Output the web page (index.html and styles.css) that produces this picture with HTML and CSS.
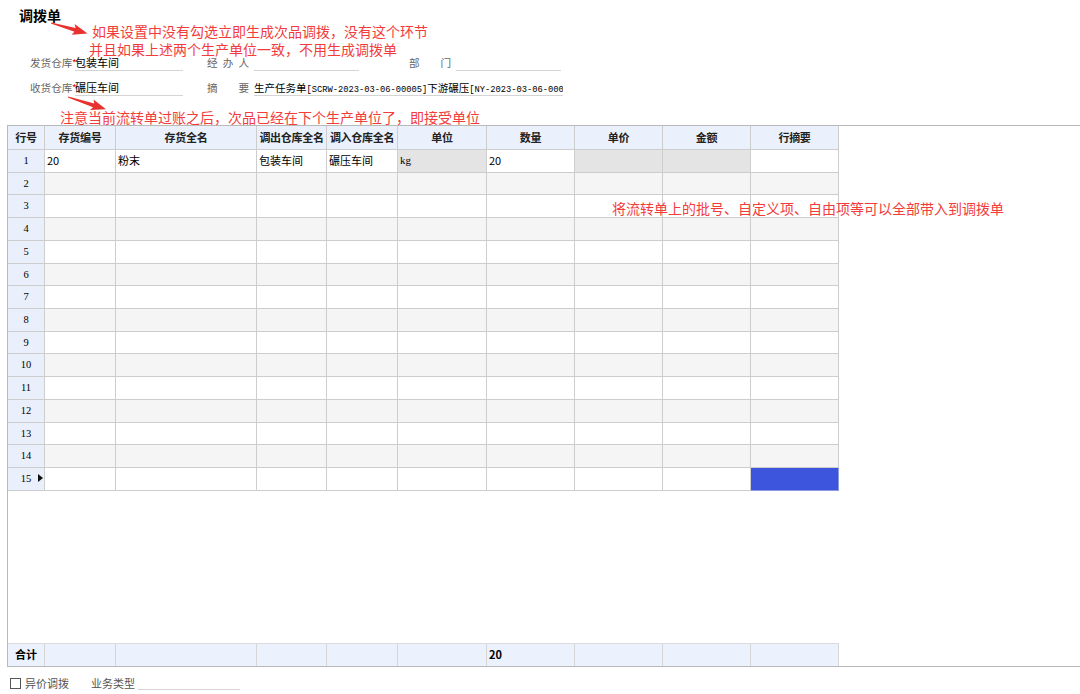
FILE: index.html
```html
<!DOCTYPE html>
<html lang="zh">
<head>
<meta charset="utf-8">
<title>调拨单</title>
<link rel="stylesheet" href="styles.css">
</head>
<body>
<div class="page">
  <div class="title">调拨单</div>

  <div class="form">
    <div class="frow">
      <span class="lab">发货仓库</span><span class="req">*</span><span class="field f1">包装车间</span>
      <span class="lab jl">经办人</span><span class="field f2"></span>
      <span class="lab jl l3">部门</span><span class="field f2"></span>
    </div>
    <div class="frow r2">
      <span class="lab">收货仓库</span><span class="req">*</span><span class="field f1">碾压车间</span>
      <span class="lab jl">摘要</span><span class="field f3">生产任务单<span class="mono">[SCRW-2023-03-06-00005]</span>下游碾压<span class="mono">[NY-2023-03-06-000</span></span>
    </div>
  </div>

  <div class="grid">
    <div class="sheet">
      <div class="c h">行号</div><div class="c h">存货编号</div><div class="c h">存货全名</div><div class="c h">调出仓库全名</div><div class="c h">调入仓库全名</div><div class="c h">单位</div><div class="c h">数量</div><div class="c h">单价</div><div class="c h">金额</div><div class="c h">行摘要</div>

      <div class="c n">1</div><div class="c">20</div><div class="c">粉末</div><div class="c">包装车间</div><div class="c">碾压车间</div><div class="c g ser">kg</div><div class="c">20</div><div class="c g"></div><div class="c g"></div><div class="c"></div>

      <div class="c n">2</div><div class="c e"></div><div class="c e"></div><div class="c e"></div><div class="c e"></div><div class="c e"></div><div class="c e"></div><div class="c e"></div><div class="c e"></div><div class="c e"></div>
      <div class="c n">3</div><div class="c"></div><div class="c"></div><div class="c"></div><div class="c"></div><div class="c"></div><div class="c"></div><div class="c"></div><div class="c"></div><div class="c"></div>
      <div class="c n">4</div><div class="c e"></div><div class="c e"></div><div class="c e"></div><div class="c e"></div><div class="c e"></div><div class="c e"></div><div class="c e"></div><div class="c e"></div><div class="c e"></div>
      <div class="c n">5</div><div class="c"></div><div class="c"></div><div class="c"></div><div class="c"></div><div class="c"></div><div class="c"></div><div class="c"></div><div class="c"></div><div class="c"></div>
      <div class="c n">6</div><div class="c e"></div><div class="c e"></div><div class="c e"></div><div class="c e"></div><div class="c e"></div><div class="c e"></div><div class="c e"></div><div class="c e"></div><div class="c e"></div>
      <div class="c n">7</div><div class="c"></div><div class="c"></div><div class="c"></div><div class="c"></div><div class="c"></div><div class="c"></div><div class="c"></div><div class="c"></div><div class="c"></div>
      <div class="c n">8</div><div class="c e"></div><div class="c e"></div><div class="c e"></div><div class="c e"></div><div class="c e"></div><div class="c e"></div><div class="c e"></div><div class="c e"></div><div class="c e"></div>
      <div class="c n">9</div><div class="c"></div><div class="c"></div><div class="c"></div><div class="c"></div><div class="c"></div><div class="c"></div><div class="c"></div><div class="c"></div><div class="c"></div>
      <div class="c n">10</div><div class="c e"></div><div class="c e"></div><div class="c e"></div><div class="c e"></div><div class="c e"></div><div class="c e"></div><div class="c e"></div><div class="c e"></div><div class="c e"></div>
      <div class="c n">11</div><div class="c"></div><div class="c"></div><div class="c"></div><div class="c"></div><div class="c"></div><div class="c"></div><div class="c"></div><div class="c"></div><div class="c"></div>
      <div class="c n">12</div><div class="c e"></div><div class="c e"></div><div class="c e"></div><div class="c e"></div><div class="c e"></div><div class="c e"></div><div class="c e"></div><div class="c e"></div><div class="c e"></div>
      <div class="c n">13</div><div class="c"></div><div class="c"></div><div class="c"></div><div class="c"></div><div class="c"></div><div class="c"></div><div class="c"></div><div class="c"></div><div class="c"></div>
      <div class="c n">14</div><div class="c e"></div><div class="c e"></div><div class="c e"></div><div class="c e"></div><div class="c e"></div><div class="c e"></div><div class="c e"></div><div class="c e"></div><div class="c e"></div>
      <div class="c n cur">15<span class="tri"></span></div><div class="c"></div><div class="c"></div><div class="c"></div><div class="c"></div><div class="c"></div><div class="c"></div><div class="c"></div><div class="c"></div><div class="c sel"></div>
    </div>
    <div class="spacer"></div>
    <div class="sheet foot">
      <div class="c f b">合计</div><div class="c f"></div><div class="c f"></div><div class="c f"></div><div class="c f"></div><div class="c f"></div><div class="c f b">20</div><div class="c f"></div><div class="c f"></div><div class="c f"></div>
    </div>
  </div>

  <div class="bottom">
    <span class="chk"></span><span class="btxt">异价调拨</span>
    <span class="btxt bt2">业务类型</span><span class="field f4"></span>
  </div>

  <div class="note n1">如果设置中没有勾选立即生成次品调拨，没有这个环节</div>
  <div class="note n2">并且如果上述两个生产单位一致，不用生成调拨单</div>
  <div class="note n3">注意当前流转单过账之后，次品已经在下个生产单位了，即接受单位</div>
  <div class="note n4">将流转单上的批号、自定义项、自由项等可以全部带入到调拨单</div>

  <svg class="arrow a1" width="40" height="14" viewBox="0 -7 40 14"><polygon points="0,-0.6 25,-2 23,-5.5 38,0 23,5.5 25,2 0,0.6" fill="#e8322f"/></svg>
  <svg class="arrow a2" width="42" height="14" viewBox="0 -7 42 14"><polygon points="0,-0.6 27,-2 25,-5.5 40,0 25,5.5 27,2 0,0.6" fill="#e8322f"/></svg>
</div>
</body>
</html>
```

FILE: styles.css
```css
* { box-sizing: border-box; }
html, body { margin: 0; padding: 0; background: #fff; }
body {
  font-family: "Noto Sans CJK SC", "Noto Sans", sans-serif;
  color: #000;
  width: 1080px;
  height: 694px;
  overflow: hidden;
}
.page { position: relative; width: 1080px; height: 694px; }

.title {
  height: 30px;
  padding-left: 19px;
  padding-top: 6px;
  font-size: 14px;
  line-height: 18px;
  font-weight: bold;
}

.form { margin-top: 21px; font-size: 11px; }
.frow {
  display: flex;
  align-items: flex-end;
  height: 24px;
  padding-left: 30px;
  padding-bottom: 4px;
}
.frow.r2 { height: 25px; padding-bottom: 4px; }
.lab {
  display: inline-block;
  width: 42px;
  color: #666;
  line-height: 14px;
  white-space: nowrap;
  font-size: 10.6px;
  padding-bottom: 1px;
}
.lab.jl { text-align: justify; text-align-last: justify; margin-left: 24px; margin-right: 5px; }
.lab.l3 { margin-left: 50px; }
.req { display: inline-block; width: 3px; color: #e00; font-size: 10px; line-height: 14px; padding-bottom: 1px; }
.field {
  display: inline-block;
  height: 16px;
  line-height: 15px;
  border-bottom: 1px solid #d4d4d4;
  white-space: nowrap;
  overflow: hidden;
  font-size: 11px;
  color: #000;
}
.f1 { width: 108px; }
.f2 { width: 105px; }
.f3 { width: 309px; font-size: 10.5px; }
.mono { font-family: "Liberation Mono", monospace; font-size: 8.75px; }

.grid {
  margin-top: 25px;
  margin-left: 7px;
  width: 1080px;
  height: 542px;
  border-top: 1px solid #b9b9b9;
  border-bottom: 1px solid #b9b9b9;
  border-left: 1px solid #b9b9b9;
  display: flex;
  flex-direction: column;
}
.sheet {
  display: grid;
  grid-template-columns: 37px 71px 141px 70px 71px 89px 88px 88px 88px 88px;
  grid-template-rows: 24px repeat(15, 22.73px);
  width: 831px;
}
.spacer { flex: 1; }
.sheet.foot { grid-template-rows: 23px; }

.c {
  border-right: 1px solid #cdcdcd;
  border-bottom: 1px solid #cdcdcd;
  font-size: 11px;
  line-height: 21px;
  padding-left: 2px;
  white-space: nowrap;
  overflow: hidden;
  background: #fff;
}
.c.h {
  background: #eaf1fc;
  font-weight: bold;
  text-align: center;
  padding-left: 0;
  line-height: 22px;
  color: #222;
  letter-spacing: -0.3px;
}
.c.n {
  background: #e9f0fb;
  text-align: center;
  padding-left: 0;
  font-family: "Liberation Serif", serif;
  font-size: 10.5px;
  position: relative;
}
.c.e { background: #f5f5f5; }
.c.g { background: #e4e4e4; }
.ser { font-family: "Liberation Serif", serif; }
.c.sel { background: #3c55dc; border: 1px solid #8e9ae0; border-left: none; border-top: none; }
.tri {
  position: absolute;
  right: 1px;
  top: 6px;
  width: 0; height: 0;
  border-top: 4.5px solid transparent;
  border-bottom: 4.5px solid transparent;
  border-left: 5px solid #111;
}
.c.f {
  background: #ecf2fd;
  border-top: 1px solid #dadada;
  border-right: 1px solid #d6d6d6;
  border-bottom: none;
  line-height: 21px;
}
.c.b { font-weight: bold; }
.foot .c:first-child { text-align: center; padding-left: 0; }

.bottom {
  height: 31px;
  display: flex;
  align-items: center;
  padding-left: 10px;
  font-size: 11px;
  color: #555;
  padding-top: 2px;
}
.chk {
  width: 11px; height: 11px;
  border: 1px solid #555;
  background: #fff;
  margin-right: 4px;
}
.btxt { line-height: 13px; }
.bt2 { margin-left: 22px; margin-right: 3px; }
.f4 { width: 102px; height: 12px; }

.note {
  position: absolute;
  color: #f23c3c;
  font-size: 14px;
  line-height: 16px;
  white-space: nowrap;
}
.n1 { left: 92px; top: 23px; }
.n2 { left: 89px; top: 41px; }
.n3 { left: 60px; top: 109px; }
.n4 { left: 612px; top: 200px; }

.arrow { position: absolute; transform-origin: 0 50%; }
.a1 { left: 51px; top: 16px; transform: rotate(16deg); }
.a2 { left: 68px; top: 90px; transform: rotate(18deg); }
```
